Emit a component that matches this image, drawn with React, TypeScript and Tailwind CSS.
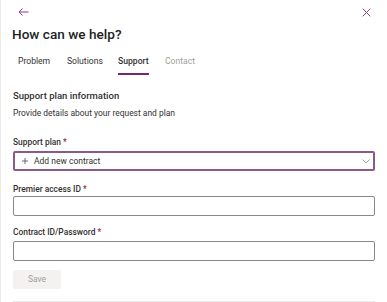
import React from "react";

const font = { fontFamily: '"Segoe UI", Roboto, "Open Sans", sans-serif' };

function Label({ text }: { text: string }) {
  return (
    <div className="text-[8.4px] leading-[14px] font-medium text-[#323130]">
      {text} <span className="text-[#a4262c]">*</span>
    </div>
  );
}

export default function App() {
  return (
    <div
      className="relative w-[387px] h-[302px] bg-white overflow-hidden border-l border-[#ececec] flex flex-col"
      style={font}
    >
      <span className="absolute left-[-1px] top-0 w-[1px] h-[22px] bg-[#a8a8a8]" />
      {/* top bar */}
      <div className="h-[24px] flex items-center justify-between pl-[17px] pr-[16px]">
        <svg width="11" height="8" viewBox="0 0 11 8" fill="none">
          <path d="M10.5 4H1M4.5 0.5L1 4L4.5 7.5" stroke="#8a3f8a" strokeWidth="1" />
        </svg>
        <svg width="9" height="9" viewBox="0 0 9 9" fill="none">
          <path d="M0.7 0.7L8.3 8.3M8.3 0.7L0.7 8.3" stroke="#8a3f8a" strokeWidth="1" />
        </svg>
      </div>
      {/* title */}
      <div className="pl-[11px] text-[13.6px] leading-[20px] font-medium text-[#201f1e]">
        How can we help?
      </div>
      {/* tabs */}
      <div className="mt-[5px] flex pl-[17px] h-[26px] text-[8.6px]">
        <div className="w-[49px] text-[#323130] leading-[24px]">Problem</div>
        <div className="w-[51px] text-[#323130] leading-[24px]">Solutions</div>
        <div className="w-[47px]">
          <div className="inline-flex flex-col">
            <span className="leading-[24px] font-medium text-[#323130]">Support</span>
            <span className="h-[2px] bg-[#742774]" />
          </div>
        </div>
        <div className="text-[#a19f9d] leading-[24px]">Contact</div>
      </div>
      {/* body */}
      <div className="px-[12px] flex flex-col">
        <div className="mt-[13px] text-[9.5px] leading-[16px] font-medium text-[#323130]">
          Support plan information
        </div>
        <div className="mt-[2px] text-[8.45px] leading-[14px] text-[#323130]">
          Provide details about your request and plan
        </div>
        <div className="mt-[15px]">
          <Label text="Support plan" />
        </div>
        <div className="mt-[2px] h-[20px] border-2 border-[#8b5a8b] rounded-[2px] flex items-center pl-[7px] pr-[3px]">
          <svg width="6" height="6" viewBox="0 0 6 6" fill="none">
            <path d="M3 0V6M0 3H6" stroke="#605e5c" strokeWidth="0.9" />
          </svg>
          <span className="ml-[6px] text-[8.5px] leading-[14px] text-[#323130]">Add new contract</span>
          <svg className="ml-auto" width="8" height="5" viewBox="0 0 8 5" fill="none">
            <path d="M0.5 0.5L4 4L7.5 0.5" stroke="#a19f9d" strokeWidth="1" />
          </svg>
        </div>
        <div className="mt-[11px]">
          <Label text="Premier access ID" />
        </div>
        <div className="h-[20px] border border-[#8a8886] rounded-[2px]" />
        <div className="mt-[9px]">
          <Label text="Contract ID/Password" />
        </div>
        <div className="mt-[2px] h-[20px] border border-[#8a8886] rounded-[2px]" />
        <div className="mt-[9px] w-[48px] h-[19px] bg-[#f3f2f1] rounded-[2px] flex items-center justify-center text-[8.5px] text-[#a19f9d]">
          Save
        </div>
        <div className="mt-[12px] h-[1px] bg-[#edebe9]" />
      </div>
    </div>
  );
}
